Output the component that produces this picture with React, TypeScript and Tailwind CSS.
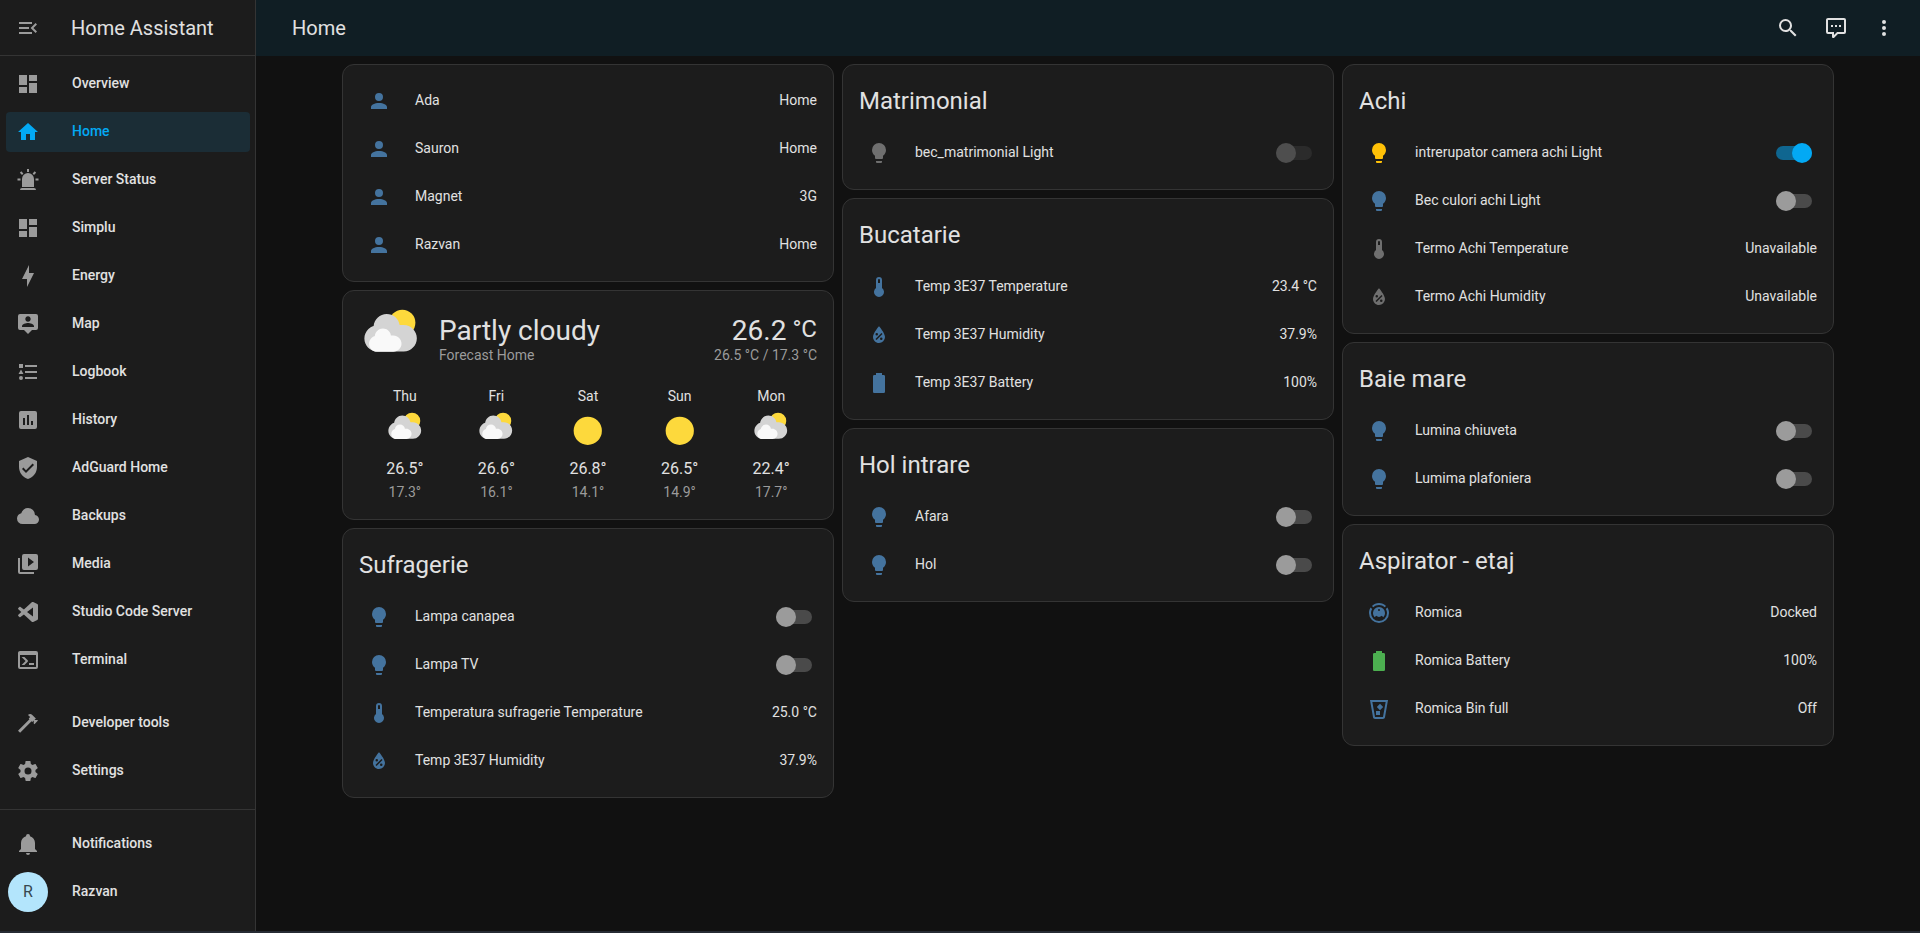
import React, { useState } from 'react';

const icons = {
  menuOpen: 'M21,15.61L19.59,17L14.58,12L19.59,7L21,8.39L17.44,12L21,15.61M3,6H16V8H3V6M3,13V11H13V13H3M3,18V16H16V18H3Z',
  dashboard: 'M13,3V9H21V3M13,21H21V11H13M3,21H11V15H3M3,13H11V3H3V13Z',
  home: 'M10,20V14H14V20H19V12H22L12,3L2,12H5V20H10Z',
  alarm: 'M6,6.9L3.87,4.78L5.28,3.37L7.4,5.5L6,6.9M13,1V4H11V1H13M20.13,4.78L18,6.9L16.6,5.5L18.72,3.37L20.13,4.78M4.5,10.5V12.5H1.5V10.5H4.5M19.5,10.5H22.5V12.5H19.5V10.5M6,20H18A2,2 0 0,1 20,22H4A2,2 0 0,1 6,20M12,5A6,6 0 0,1 18,11V19H6V11A6,6 0 0,1 12,5Z',
  bolt: 'M11 15H6L13 1V9H18L11 23V15Z',
  map: 'M20,2H4A2,2 0 0,0 2,4V16A2,2 0 0,0 4,18H8L12,22L16,18H20A2,2 0 0,0 22,16V4A2,2 0 0,0 20,2M12,4.3C13.5,4.3 14.7,5.5 14.7,7C14.7,8.5 13.5,9.7 12,9.7C10.5,9.7 9.3,8.5 9.3,7C9.3,5.5 10.5,4.3 12,4.3M18,15H6V14.1C6,12.1 10,11 12,11C14,11 18,12.1 18,14.1V15Z',
  logbook: 'M5,9.5L7.5,14H2.5L5,9.5M3,4H7V8H3V4M5,20A2,2 0 0,0 7,18A2,2 0 0,0 5,16A2,2 0 0,0 3,18A2,2 0 0,0 5,20M9,5V7H21V5H9M9,19H21V17H9V19M9,13H21V11H9V13Z',
  history: 'M19,3H5A2,2 0 0,0 3,5V19A2,2 0 0,0 5,21H19A2,2 0 0,0 21,19V5A2,2 0 0,0 19,3M9,17H7V10H9V17M13,17H11V7H13V17M17,17H15V13H17V17Z',
  shield: 'M10,17L6,13L7.41,11.59L10,14.17L16.59,7.58L18,9M12,1L3,5V11C3,16.55 6.84,21.74 12,23C17.16,21.74 21,16.55 21,11V5L12,1Z',
  cloud: 'M6.5 20Q4.22 20 2.61 18.43 1 16.85 1 14.58 1 12.63 2.17 11.1 3.35 9.57 5.25 9.15 5.88 6.85 7.75 5.43 9.63 4 12 4 14.93 4 16.96 6.04 19 8.07 19 11 20.73 11.2 21.86 12.5 23 13.78 23 15.5 23 17.38 21.69 18.69 20.38 20 18.5 20Z',
  media: 'M4,6H2V20A2,2 0 0,0 4,22H18V20H4V6M20,2H8A2,2 0 0,0 6,4V16A2,2 0 0,0 8,18H20A2,2 0 0,0 22,16V4A2,2 0 0,0 20,2M12,14.5V5.5L18,10L12,14.5Z',
  code: 'M21.29 4.1L17.18 2.12C16.7 1.9 16.14 2 15.77 2.36L7.9 9.53L4.47 6.93C4.15 6.69 3.7 6.71 3.41 6.98L2.31 7.98C1.94 8.31 1.94 8.88 2.31 9.22L5.28 12L2.31 14.78C1.94 15.12 1.94 15.69 2.31 16.02L3.41 17.02C3.7 17.29 4.15 17.31 4.47 17.07L7.9 14.47L15.77 21.64C16.14 22 16.7 22.1 17.18 21.88L21.29 19.9C21.73 19.69 22 19.25 22 18.77V5.23C22 4.75 21.73 4.31 21.29 4.1M17 16.54L11 12L17 7.46V16.54Z',
  console: 'M20,19V7H4V19H20M20,3A2,2 0 0,1 22,5V19A2,2 0 0,1 20,21H4A2,2 0 0,1 2,19V5C2,3.89 2.9,3 4,3H20M13,17V15H18V17H13M9.58,13L5.57,9H8.4L11.7,12.3C12.09,12.69 12.09,13.33 11.7,13.72L8.42,17H5.59L9.58,13Z',
  hammer: 'M2 19.63L13.43 8.2L12.72 7.5L14.14 6.07L12 3.89C13.2 2.7 15.09 2.7 16.27 3.89L19.87 7.5L18.45 8.91H21.29L22 9.62L18.45 13.21L17.74 12.5V9.62L16.27 11.04L15.56 10.33L4.13 21.76L2 19.63Z',
  cog: 'M12,15.5A3.5,3.5 0 0,1 8.5,12A3.5,3.5 0 0,1 12,8.5A3.5,3.5 0 0,1 15.5,12A3.5,3.5 0 0,1 12,15.5M19.43,12.97C19.47,12.65 19.5,12.33 19.5,12C19.5,11.67 19.47,11.34 19.43,11L21.54,9.37C21.73,9.22 21.78,8.95 21.66,8.73L19.66,5.27C19.54,5.05 19.27,4.96 19.05,5.05L16.56,6.05C16.04,5.66 15.5,5.32 14.87,5.07L14.5,2.42C14.46,2.18 14.25,2 14,2H10C9.75,2 9.54,2.18 9.5,2.42L9.13,5.07C8.5,5.32 7.96,5.66 7.44,6.05L4.95,5.05C4.73,4.96 4.46,5.05 4.34,5.27L2.34,8.73C2.21,8.95 2.27,9.22 2.46,9.37L4.57,11C4.53,11.34 4.5,11.67 4.5,12C4.5,12.33 4.53,12.65 4.57,12.97L2.46,14.63C2.27,14.78 2.21,15.05 2.34,15.27L4.34,18.73C4.46,18.95 4.73,19.03 4.95,18.95L7.44,17.94C7.96,18.34 8.5,18.68 9.13,18.93L9.5,21.58C9.54,21.82 9.75,22 10,22H14C14.25,22 14.46,21.82 14.5,21.58L14.87,18.93C15.5,18.67 16.04,18.34 16.56,17.94L19.05,18.95C19.27,19.03 19.54,18.95 19.66,18.73L21.66,15.27C21.78,15.05 21.73,14.78 21.54,14.63L19.43,12.97Z',
  bell: 'M21,19V20H3V19L5,17V11C5,7.9 7.03,5.17 10,4.29C10,4.19 10,4.1 10,4A2,2 0 0,1 12,2A2,2 0 0,1 14,4C14,4.1 14,4.19 14,4.29C16.97,5.17 19,7.9 19,11V17L21,19M14,21A2,2 0 0,1 12,23A2,2 0 0,1 10,21',
  account: 'M12,4A4,4 0 0,1 16,8A4,4 0 0,1 12,12A4,4 0 0,1 8,8A4,4 0 0,1 12,4M12,14C16.42,14 20,15.79 20,18V20H4V18C4,15.79 7.58,14 12,14Z',
  bulb: 'M12,2A7,7 0 0,0 5,9C5,11.38 6.19,13.47 8,14.74V17A1,1 0 0,0 9,18H15A1,1 0 0,0 16,17V14.74C17.81,13.47 19,11.38 19,9A7,7 0 0,0 12,2M9,21A1,1 0 0,0 10,22H14A1,1 0 0,0 15,21V20H9V21Z',
  thermometer: 'M15 13V5A3 3 0 0 0 9 5V13A5 5 0 1 0 15 13M12 4A1 1 0 0 1 13 5V8H11V5A1 1 0 0 1 12 4Z',
  humidity: 'M12,3.25C12,3.25 6,10 6,14C6,17.32 8.69,20 12,20A6,6 0 0,0 18,14C18,10 12,3.25 12,3.25M14.47,9.97L15.53,11.03L9.53,17.03L8.47,15.97M9.75,10A1.25,1.25 0 0,1 11,11.25A1.25,1.25 0 0,1 9.75,12.5A1.25,1.25 0 0,1 8.5,11.25A1.25,1.25 0 0,1 9.75,10M14.25,14.5A1.25,1.25 0 0,1 15.5,15.75A1.25,1.25 0 0,1 14.25,17A1.25,1.25 0 0,1 13,15.75A1.25,1.25 0 0,1 14.25,14.5Z',
  battery: 'M16.67,4H15V2H9V4H7.33A1.33,1.33 0 0,0 6,5.33V20.67C6,21.4 6.6,22 7.33,22H16.67A1.33,1.33 0 0,0 18,20.67V5.33C18,4.6 17.4,4 16.67,4Z',
  vacuum: 'M12,2C14.65,2 17.19,3.06 19.07,4.93L17.65,6.35C16.15,4.85 14.12,4 12,4C9.88,4 7.84,4.84 6.35,6.35L4.93,4.93C6.81,3.06 9.35,2 12,2M3.66,6.5L5.11,7.94C4.39,9.17 4,10.57 4,12A8,8 0 0,0 12,20A8,8 0 0,0 20,12C20,10.57 19.61,9.17 18.88,7.94L20.34,6.5C21.42,8.12 22,10.04 22,12A10,10 0 0,1 12,22A10,10 0 0,1 2,12C2,10.04 2.58,8.12 3.66,6.5M12,6A6,6 0 0,1 18,12C18,13.59 17.37,15.12 16.24,16.24L14.83,14.83C14.08,15.58 13.06,16 12,16C10.94,16 9.92,15.58 9.17,14.83L7.76,16.24C6.63,15.12 6,13.59 6,12A6,6 0 0,1 12,6M12,8A1,1 0 0,0 11,9A1,1 0 0,0 12,10A1,1 0 0,0 13,9A1,1 0 0,0 12,8Z',
  bin: 'M21.03,3L18,20.31C17.83,21.27 17,22 16,22H8C7,22 6.17,21.27 6,20.31L2.97,3H21.03M5.36,5L8,20H16L18.64,5H5.36M9,18V14H13V18H9M13,13.18L9.82,10L13,6.82L16.18,10L13,13.18Z',
  search: 'M9.5,3A6.5,6.5 0 0,1 16,9.5C16,11.11 15.41,12.59 14.44,13.73L14.71,14H15.5L20.5,19L19,20.5L14,15.5V14.71L13.73,14.44C12.59,15.41 11.11,16 9.5,16A6.5,6.5 0 0,1 3,9.5A6.5,6.5 0 0,1 9.5,3M9.5,5C7,5 5,7 5,9.5C5,12 7,14 9.5,14C12,14 14,12 14,9.5C14,7 12,5 9.5,5Z',
  comment: 'M9,22A1,1 0 0,1 8,21V18H4A2,2 0 0,1 2,16V4C2,2.89 2.9,2 4,2H20A2,2 0 0,1 22,4V16A2,2 0 0,1 20,18H13.9L10.2,21.71C10,21.9 9.75,22 9.5,22V22H9M10,16V19.08L13.08,16H20V4H4V16H10M17,11H15V9H17V11M13,11H11V9H13V11M9,11H7V9H9V11Z',
  dots: 'M12,16A2,2 0 0,1 14,18A2,2 0 0,1 12,20A2,2 0 0,1 10,18A2,2 0 0,1 12,16M12,10A2,2 0 0,1 14,12A2,2 0 0,1 12,14A2,2 0 0,1 10,12A2,2 0 0,1 12,10M12,4A2,2 0 0,1 14,6A2,2 0 0,1 12,8A2,2 0 0,1 10,6A2,2 0 0,1 12,4Z'
};

type IconName = keyof typeof icons;

interface NavItem {
  name: string;
  icon: IconName;
  active?: boolean;
}

interface Entity {
  name: string;
  icon: IconName;
  color?: string;
  state?: string;
  on?: boolean;
  disabled?: boolean;
}

interface Forecast {
  day: string;
  condition: 'partlycloudy' | 'sunny';
  high: string;
  low: string;
}

const navItems: NavItem[] = [
  { name: 'Overview', icon: 'dashboard' },
  { name: 'Home', icon: 'home', active: true },
  { name: 'Server Status', icon: 'alarm' },
  { name: 'Simplu', icon: 'dashboard' },
  { name: 'Energy', icon: 'bolt' },
  { name: 'Map', icon: 'map' },
  { name: 'Logbook', icon: 'logbook' },
  { name: 'History', icon: 'history' },
  { name: 'AdGuard Home', icon: 'shield' },
  { name: 'Backups', icon: 'cloud' },
  { name: 'Media', icon: 'media' },
  { name: 'Studio Code Server', icon: 'code' },
  { name: 'Terminal', icon: 'console' }
];

const toolItems: NavItem[] = [
  { name: 'Developer tools', icon: 'hammer' },
  { name: 'Settings', icon: 'cog' }
];

const people: Entity[] = [
  { name: 'Ada', icon: 'account', state: 'Home' },
  { name: 'Sauron', icon: 'account', state: 'Home' },
  { name: 'Magnet', icon: 'account', state: '3G' },
  { name: 'Razvan', icon: 'account', state: 'Home' }
];

const sufragerie: Entity[] = [
  { name: 'Lampa canapea', icon: 'bulb' },
  { name: 'Lampa TV', icon: 'bulb' },
  { name: 'Temperatura sufragerie Temperature', icon: 'thermometer', state: '25.0 °C' },
  { name: 'Temp 3E37 Humidity', icon: 'humidity', state: '37.9%' }
];

const matrimonial: Entity[] = [
  { name: 'bec_matrimonial Light', icon: 'bulb', color: 'text-[#6f6f6f]', disabled: true }
];

const bucatarie: Entity[] = [
  { name: 'Temp 3E37 Temperature', icon: 'thermometer', state: '23.4 °C' },
  { name: 'Temp 3E37 Humidity', icon: 'humidity', state: '37.9%' },
  { name: 'Temp 3E37 Battery', icon: 'battery', state: '100%' }
];

const hol: Entity[] = [
  { name: 'Afara', icon: 'bulb' },
  { name: 'Hol', icon: 'bulb' }
];

const achi: Entity[] = [
  { name: 'intrerupator camera achi Light', icon: 'bulb', color: 'text-[#ffc107]', on: true },
  { name: 'Bec culori achi Light', icon: 'bulb' },
  { name: 'Termo Achi Temperature', icon: 'thermometer', color: 'text-[#6f6f6f]', state: 'Unavailable' },
  { name: 'Termo Achi Humidity', icon: 'humidity', color: 'text-[#6f6f6f]', state: 'Unavailable' }
];

const baie: Entity[] = [
  { name: 'Lumina chiuveta', icon: 'bulb' },
  { name: 'Lumima plafoniera', icon: 'bulb' }
];

const aspirator: Entity[] = [
  { name: 'Romica', icon: 'vacuum', state: 'Docked' },
  { name: 'Romica Battery', icon: 'battery', color: 'text-[#4caf50]', state: '100%' },
  { name: 'Romica Bin full', icon: 'bin', state: 'Off' }
];

const forecast: Forecast[] = [
  { day: 'Thu', condition: 'partlycloudy', high: '26.5°', low: '17.3°' },
  { day: 'Fri', condition: 'partlycloudy', high: '26.6°', low: '16.1°' },
  { day: 'Sat', condition: 'sunny', high: '26.8°', low: '14.1°' },
  { day: 'Sun', condition: 'sunny', high: '26.5°', low: '14.9°' },
  { day: 'Mon', condition: 'partlycloudy', high: '22.4°', low: '17.7°' }
];

const Icon = ({ name }: { name: IconName }) => (
  <svg viewBox="0 0 24 24" className="size-6 shrink-0" fill="currentColor" aria-hidden="true">
    <path d={icons[name]} />
  </svg>
);

const WeatherIcon = ({ condition, className }: { condition: Forecast['condition']; className: string }) => (
  <svg viewBox="0 0 17 17" className={className} aria-hidden="true">
    {condition === 'sunny' ? (
      <circle cx="8.4" cy="8.4" r="6" fill="#fdd93c" />
    ) : (
      <>
        <circle cx="11.5" cy="4.21" r="3.48" fill="#fdd93c" />
        <path
          fill="#d4d4d4"
          d="m3.8863 5.035c-0.54892 0.16898-1.04 0.46637-1.4372 0.8636-0.63077 0.63041-1.0206 1.4933-1.0206 2.455 0 1.9251 1.5589 3.4682 3.4837 3.4682h6.9688c1.9251 0 3.484-1.5981 3.484-3.5232 0-1.9251-1.5589-3.5232-3.484-3.5232h-1.0834c-0.25294-1.6916-1.6986-2.9083-3.4463-2.9083-1.7995 0-3.2805 1.4153-3.465 3.1679"
        />
        <path
          fill="#f9f9f9"
          d="m4.1996 7.6995c-0.33902 0.10407-0.64276 0.28787-0.88794 0.5334-0.39017 0.38982-0.63147 0.92322-0.63147 1.5176 0 1.1896 0.96414 2.1431 2.1537 2.1431h4.3071c1.1896 0 2.153-0.98742 2.153-2.1777 0-1.1896-0.96344-2.1777-2.153-2.1777h-0.66992c-0.15593-1.0449-1.0499-1.7974-2.1297-1.7974-1.112 0-2.0274 0.87524-2.1417 1.9586"
        />
      </>
    )}
  </svg>
);

const NavLink = ({ item }: { item: NavItem }) => (
  <a
    href="#"
    aria-current={item.active ? 'page' : undefined}
    className={`mr-[5px] ml-1.5 flex h-10 items-center gap-8 rounded pl-2.5 text-sm font-medium ${
      item.active ? 'bg-[#1b2d36] text-[#03a9f4]' : 'text-[#e1e1e1] hover:bg-[#262626]'
    }`}
  >
    <span className={item.active ? 'text-[#03a9f4]' : 'text-[#9b9b9b]'}>
      <Icon name={item.icon} />
    </span>
    <span className="pb-0.5">{item.name}</span>
  </a>
);

const Sidebar = () => (
  <aside className="flex w-64 shrink-0 flex-col border-r border-[#343434] bg-[#1c1c1c]">
    <div className="flex h-14 items-center gap-[19px] border-b border-[#343434] pl-1">
      <button type="button" aria-label="Toggle sidebar" className="flex size-12 items-center justify-center text-[#9b9b9b]">
        <Icon name="menuOpen" />
      </button>
      <span className="text-xl">Home Assistant</span>
    </div>
    <nav className="flex flex-1 flex-col gap-2 pt-2">
      {navItems.map((item) => (
        <NavLink key={item.name} item={item} />
      ))}
    </nav>
    <div className="flex flex-col gap-2 pb-[18px]">
      {toolItems.map((item) => (
        <NavLink key={item.name} item={item} />
      ))}
    </div>
    <div className="flex flex-col gap-2 border-t border-[#343434] pt-3.5 pb-[19px]">
      <NavLink item={{ name: 'Notifications', icon: 'bell' }} />
      <a href="#" className="mr-[5px] ml-1.5 flex h-10 items-center gap-6 pl-0.5 text-sm font-medium">
        <span className="flex size-10 items-center justify-center rounded-full bg-[#b3e5fc] text-base font-normal text-[#37474f]">
          R
        </span>
        <span className="pb-0.5">Razvan</span>
      </a>
    </div>
  </aside>
);

const Toggle = ({ on, disabled }: { on?: boolean; disabled?: boolean }) => {
  const [checked, setChecked] = useState(Boolean(on));
  return (
    <input
      type="checkbox"
      role="switch"
      checked={checked}
      disabled={disabled}
      onChange={() => setChecked(!checked)}
      className="mr-[5px] flex h-3.5 w-9 shrink-0 appearance-none items-center rounded-full bg-[#4a4a4a] before:size-5 before:shrink-0 before:rounded-full before:bg-[#9b9b9b] checked:justify-end checked:bg-[#0f6690] checked:before:bg-[#03a9f4] disabled:bg-[#2b2b2b] disabled:before:bg-[#4e4e4e]"
    />
  );
};

const EntityRow = ({ entity }: { entity: Entity }) => {
  const Row = entity.state ? 'div' : 'label';
  return (
    <Row className="flex h-10 items-center text-sm">
      <span className={`flex size-10 items-center justify-center ${entity.color ?? 'text-[#44739e]'}`}>
        <Icon name={entity.icon} />
      </span>
      <span className="flex-1 truncate pb-0.5 pl-4">{entity.name}</span>
      {entity.state ? (
        <span className="pb-0.5">{entity.state}</span>
      ) : (
        <Toggle on={entity.on} disabled={entity.disabled} />
      )}
    </Row>
  );
};

const Card = ({ children }: { children: React.ReactNode }) => (
  <section className="rounded-xl border border-[#343434] bg-[#1c1c1c] px-4 pb-4">{children}</section>
);

const EntitiesCard = ({ title, entities }: { title?: string; entities: Entity[] }) => (
  <Card>
    {title ? <h2 className="pt-3 pb-2 text-2xl leading-12">{title}</h2> : <div className="h-4" />}
    <div className="flex flex-col gap-2">
      {entities.map((entity) => (
        <EntityRow key={entity.name} entity={entity} />
      ))}
    </div>
  </Card>
);

const WeatherCard = () => (
  <Card>
    <div className="flex items-center gap-4 pt-4">
      <WeatherIcon condition="partlycloudy" className="size-16" />
      <div className="flex-1">
        <div className="text-[28px] leading-8">Partly cloudy</div>
        <div className="text-sm leading-4 text-[#9b9b9b]">Forecast Home</div>
      </div>
      <div className="text-right">
        <div className="flex justify-end gap-1.5 text-[28px] leading-8">
          26.2 <span className="text-2xl leading-7">°C</span>
        </div>
        <div className="text-sm leading-4 text-[#9b9b9b]">26.5 °C / 17.3 °C</div>
      </div>
    </div>
    <div className="mt-[15px] grid grid-cols-5 pb-px">
      {forecast.map((item) => (
        <div key={item.day} className="flex flex-col items-center">
          <div className="text-sm">{item.day}</div>
          <WeatherIcon condition={item.condition} className="mt-[5px] size-10" />
          <div className="mt-1.5 text-base">{item.high}</div>
          <div className="mt-px text-sm text-[#9b9b9b]">{item.low}</div>
        </div>
      ))}
    </div>
  </Card>
);

const Header = () => (
  <header className="flex h-14 items-center justify-between bg-[#101e24] pr-3 pl-9">
    <h1 className="text-xl">Home</h1>
    <div className="flex">
      <button type="button" aria-label="Search" className="flex size-12 items-center justify-center">
        <Icon name="search" />
      </button>
      <button type="button" aria-label="Assist" className="flex size-12 items-center justify-center">
        <Icon name="comment" />
      </button>
      <button type="button" aria-label="Menu" className="flex size-12 items-center justify-center">
        <Icon name="dots" />
      </button>
    </div>
  </header>
);

const App = () => {
  return (
    <div className="flex min-h-screen border-b-2 border-[#262b33] bg-[#111111] font-['Roboto',sans-serif] text-[#e1e1e1]">
      <Sidebar />
      <div className="min-w-0 flex-1">
        <Header />
        <main className="mx-auto grid max-w-[1500px] grid-cols-1 items-start gap-2 px-1 pt-2 lg:grid-cols-3">
          <div className="flex flex-col gap-2">
            <EntitiesCard entities={people} />
            <WeatherCard />
            <EntitiesCard title="Sufragerie" entities={sufragerie} />
          </div>
          <div className="flex flex-col gap-2">
            <EntitiesCard title="Matrimonial" entities={matrimonial} />
            <EntitiesCard title="Bucatarie" entities={bucatarie} />
            <EntitiesCard title="Hol intrare" entities={hol} />
          </div>
          <div className="flex flex-col gap-2">
            <EntitiesCard title="Achi" entities={achi} />
            <EntitiesCard title="Baie mare" entities={baie} />
            <EntitiesCard title="Aspirator - etaj" entities={aspirator} />
          </div>
        </main>
      </div>
    </div>
  );
};

export default App;
